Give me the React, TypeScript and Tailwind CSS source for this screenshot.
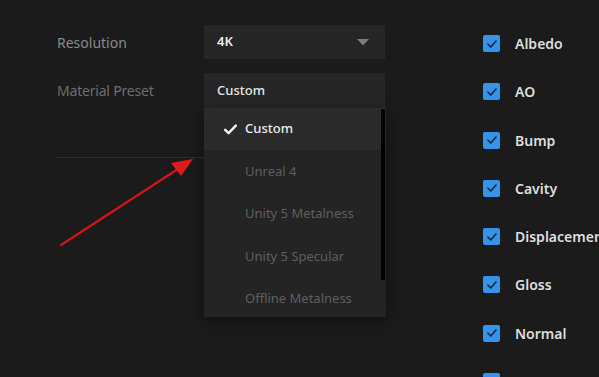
import React from "react";

const checks = ["Albedo", "AO", "Bump", "Cavity", "Displacement", "Gloss", "Normal", ""];
const items = ["Unreal 4", "Unity 5 Metalness", "Unity 5 Specular", "Offline Metalness"];

function Box() {
  return (
    <div className="w-[17px] h-[17px] rounded-[2px] bg-[#3593ea] flex items-center justify-center shrink-0">
      <svg width="12" height="12" viewBox="0 0 12 12">
        <path d="M2 6.2 L4.8 9 L10 3" fill="none" stroke="#152238" strokeWidth="1.6" strokeLinecap="round" strokeLinejoin="round" />
      </svg>
    </div>
  );
}

export default function App() {
  return (
    <div
      className="relative w-[599px] h-[377px] bg-[#1b1b1b] overflow-hidden flex"
      style={{ fontFamily: '"Noto Sans", "Open Sans", sans-serif' }}
    >
      {/* left settings */}
      <div className="pl-[57px] pt-[25px] w-[483px] shrink-0">
        <div className="flex items-center h-[34px]">
          <div className="w-[147px] text-[14px] text-[#8a8a8a]">Resolution</div>
          <div className="w-[181px] h-[34px] bg-[#262626] flex items-center justify-between pl-[13px] pr-[16px]">
            <span className="text-[13px] font-semibold text-[#ececec]">4K</span>
            <svg width="12" height="7" viewBox="0 0 12 7">
              <path d="M0 0 H12 L6 6.5 Z" fill="#7d7d7d" />
            </svg>
          </div>
        </div>
        <div className="flex items-center h-[35px] mt-[14px]">
          <div className="w-[147px] text-[14px] tracking-[-0.2px] text-[#6e6e6e]">Material Preset</div>
          <div className="w-[181px] h-[35px] bg-[#262626] flex items-center pl-[13px]">
            <span className="text-[13px] font-medium text-[#e6e6e6]">Custom</span>
          </div>
        </div>
        <div className="mt-[49px] w-[147px] h-px bg-[#2f2f2f]" />
      </div>

      {/* right checkboxes */}
      <div className="pt-[35px] flex flex-col gap-[31.3px] shrink-0">
        {checks.map((c, idx) => (
          <div key={idx} className="flex items-center h-[17px] whitespace-nowrap">
            <Box />
            {c && <span className="ml-[15px] text-[14px] font-semibold text-[#dedede]">{c}</span>}
          </div>
        ))}
      </div>

      {/* dropdown overlay */}
      <div className="absolute left-[204px] top-[108px] w-[182px] h-[209px] bg-[#242424] shadow-[0_4px_14px_rgba(0,0,0,0.45)] overflow-hidden">
        <div className="h-[42px] bg-[#2b2b2b] flex items-center pl-[20px]">
          <svg width="13" height="11" viewBox="0 0 13 11">
            <path d="M1.2 5.8 L4.6 9.2 L11.8 1.6" fill="none" stroke="#f2f2f2" strokeWidth="2.4" strokeLinecap="round" strokeLinejoin="round" />
          </svg>
          <span className="ml-[8px] text-[13px] font-medium text-[#ececec]">Custom</span>
        </div>
        {items.map((i) => (
          <div key={i} className="h-[42.5px] flex items-center pl-[41px] text-[13px] text-[#5f5f5f]">
            {i}
          </div>
        ))}
        <div className="absolute right-[1px] top-[1px] w-[4px] h-[171px] bg-black rounded-[1px]" />
      </div>

      {/* red arrow */}
      <svg className="absolute left-0 top-0" width="599" height="377" viewBox="0 0 599 377">
        <line x1="61" y1="245" x2="178" y2="169" stroke="#d01616" strokeWidth="2.2" strokeLinecap="round" />
        <path d="M193 159 L171 163 L181 176 Z" fill="#e01a1a" />
      </svg>
    </div>
  );
}
